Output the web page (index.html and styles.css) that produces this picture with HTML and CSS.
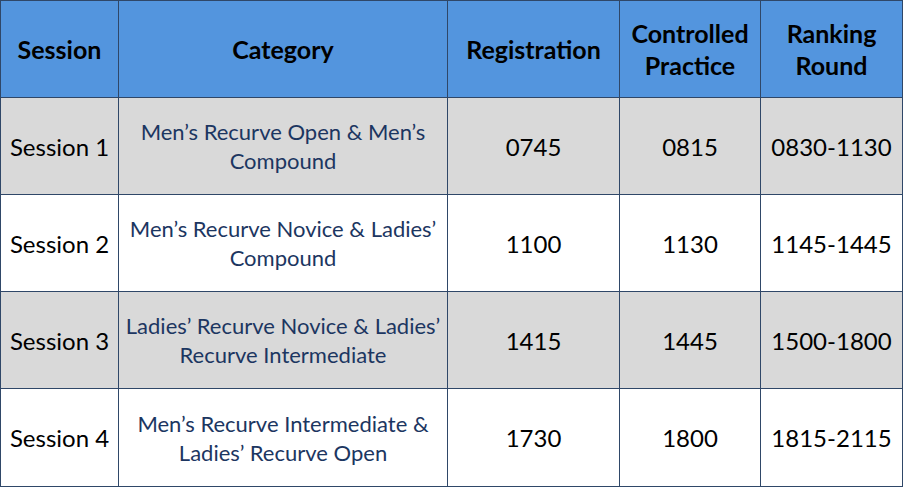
FILE: index.html
```html
<!DOCTYPE html>
<html>
<head>
<meta charset="utf-8">
<link rel="stylesheet" href="styles.css">
</head>
<body>
<table class="schedule">
  <colgroup>
    <col class="c1"><col class="c2"><col class="c3"><col class="c4"><col class="c5">
  </colgroup>
  <thead>
    <tr>
      <th>Session</th>
      <th>Category</th>
      <th>Registration</th>
      <th>Controlled<br>Practice</th>
      <th>Ranking<br>Round</th>
    </tr>
  </thead>
  <tbody>
    <tr class="shade">
      <td>Session 1</td>
      <td class="cat">Men’s Recurve Open &amp; Men’s<br>Compound</td>
      <td>0745</td>
      <td>0815</td>
      <td>0830-1130</td>
    </tr>
    <tr>
      <td>Session 2</td>
      <td class="cat">Men’s Recurve Novice &amp; Ladies’<br>Compound</td>
      <td>1100</td>
      <td>1130</td>
      <td>1145-1445</td>
    </tr>
    <tr class="shade">
      <td>Session 3</td>
      <td class="cat">Ladies’ Recurve Novice &amp; Ladies’<br>Recurve Intermediate</td>
      <td>1415</td>
      <td>1445</td>
      <td>1500-1800</td>
    </tr>
    <tr>
      <td>Session 4</td>
      <td class="cat">Men’s Recurve Intermediate &amp;<br>Ladies’ Recurve Open</td>
      <td>1730</td>
      <td>1800</td>
      <td>1815-2115</td>
    </tr>
  </tbody>
</table>
</body>
</html>
```
FILE: styles.css
```css
html, body {
  margin: 0;
  padding: 0;
  background: #ffffff;
}
.schedule {
  border-collapse: collapse;
  table-layout: fixed;
  width: 902px;
  font-family: Lato, "Open Sans", "Liberation Sans", sans-serif;
  color: #000000;
}
.c1 { width: 118px; }
.c2 { width: 329px; }
.c3 { width: 172px; }
.c4 { width: 141px; }
.c5 { width: 142px; }
.schedule th,
.schedule td {
  border: 1px solid #2f4768;
  text-align: center;
  vertical-align: middle;
  padding: 0;
}
.schedule th {
  background: #5395de;
  height: 96px;
  font-size: 25px;
  font-weight: 700;
  line-height: 32px;
}
.schedule td {
  height: 96px;
  font-size: 24px;
  line-height: 29px;
}
.schedule tbody tr:last-child td {
  height: 97px;
}
.schedule tr.shade td {
  background: #d9d9d9;
}
.schedule td.cat {
  font-size: 22px;
  line-height: 29px;
  color: #1c3661;
}
```
